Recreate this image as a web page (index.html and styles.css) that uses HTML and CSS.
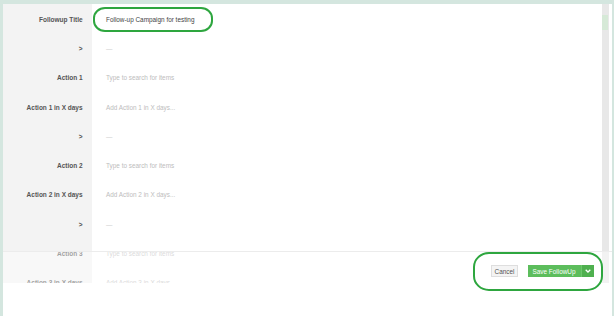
FILE: index.html
```html
<!DOCTYPE html>
<html>
<head>
<meta charset="utf-8">
<link rel="stylesheet" href="styles.css">
</head>
<body>
<div class="page">
  <div class="modal">
    <div class="modal-body">
      <div class="form">
        <div class="row"><div class="label">Followup Title</div><div class="field value">Follow-up Campaign for testing</div></div>
        <div class="row"><div class="label">&gt;</div><div class="field dash">—</div></div>
        <div class="row"><div class="label">Action 1</div><div class="field placeholder">Type to search for items</div></div>
        <div class="row"><div class="label">Action 1 in X days</div><div class="field placeholder">Add Action 1 in X days...</div></div>
        <div class="row"><div class="label">&gt;</div><div class="field dash">—</div></div>
        <div class="row"><div class="label">Action 2</div><div class="field placeholder">Type to search for items</div></div>
        <div class="row"><div class="label">Action 2 in X days</div><div class="field placeholder">Add Action 2 in X days...</div></div>
        <div class="row"><div class="label">&gt;</div><div class="field dash">—</div></div>
        <div class="row"><div class="label">Action 3</div><div class="field placeholder">Type to search for items</div></div>
        <div class="row"><div class="label">Action 3 in X days</div><div class="field placeholder">Add Action 3 in X days...</div></div>
        <div class="row"><div class="label">&gt;</div><div class="field dash">—</div></div>
      </div>
      <div class="scrollbar"><div class="thumb"></div></div>
    </div>
    <div class="modal-footer">
      <button class="btn btn-cancel">Cancel</button>
      <div class="btn-group">
        <button class="btn btn-save">Save FollowUp</button>
        <button class="btn btn-caret"><svg width="6" height="4" viewBox="0 0 6 4"><polyline points="0.7,0.8 3,3 5.3,0.8" fill="none" stroke="#fff" stroke-width="1.3"/></svg></button>
      </div>
    </div>
    <div class="mark mark-title"></div>
    <div class="mark mark-actions"></div>
  </div>
</div>
</body>
</html>
```

FILE: styles.css
```css
html, body {
  margin: 0;
  padding: 0;
}
body {
  background: #d4e6df;
  font-family: "Liberation Sans", Arial, sans-serif;
  width: 614px;
  height: 316px;
  overflow: hidden;
}
.page {
  padding: 4px 2px 0 3px;
}
.modal {
  position: relative;
  background: #fff;
  height: 312px;
  overflow: hidden;
}
.modal-body {
  display: flex;
  height: 312px;
}
.form {
  flex: 1;
  display: flex;
  flex-direction: column;
  padding-top: 0.7px;
  background: linear-gradient(to right, #f3f3f3 89px, #fff 89px);
}
.row {
  display: flex;
  align-items: center;
  height: 29.28px;
  flex-shrink: 0;
}
.label {
  width: 89px;
  box-sizing: border-box;
  padding-right: 9.4px;
  text-align: right;
  font-size: 6.5px;
  font-weight: bold;
  color: #555;
}
.field {
  padding-left: 14px;
  font-size: 6.4px;
}
.value { color: #444; }
.placeholder { color: #bdbdbd; }
.dash { color: #cfcfcf; }
.scrollbar {
  width: 7px;
  margin-right: 3px;
  background: #e8e8e8;
}
.thumb {
  margin-top: 11px;
  height: 15px;
  width: 6px;
  background: #d6e9d7;
}
.modal-footer {
  position: absolute;
  top: 247px;
  left: 0;
  right: 0;
  bottom: 0;
  border-top: 1px solid #ececec;
  background: linear-gradient(to bottom, rgba(255,255,255,0.45) 0, rgba(255,255,255,0.45) 31px, #fff 31px);
  display: flex;
  justify-content: flex-end;
  align-items: flex-start;
  gap: 9.5px;
  padding: 13px 18px 0 0;
}
.btn {
  font-family: "Liberation Sans", Arial, sans-serif;
  font-size: 6.4px;
  height: 12px;
  padding: 0;
  margin: 0;
  border: 0;
  display: flex;
  align-items: center;
  justify-content: center;
}
.btn-cancel {
  width: 27px;
  background: #f4f4f4;
  border: 1px solid #dedede;
  box-sizing: border-box;
  color: #555;
}
.btn-group {
  display: flex;
}
.btn-save {
  width: 53px;
  background: #5cbd5c;
  color: #fff;
}
.btn-caret {
  width: 13.5px;
  background: #4fb04f;
  border-left: 1px solid #6cc76c;
  box-sizing: border-box;
}
.mark {
  position: absolute;
  border: 2.2px solid #2ea63f;
  box-sizing: border-box;
  pointer-events: none;
}
.mark-title {
  left: 89.7px;
  top: 2.7px;
  width: 120.6px;
  height: 25.6px;
  border-radius: 12px / 11px;
}
.mark-actions {
  left: 469.7px;
  top: 248.3px;
  width: 130.3px;
  height: 38.4px;
  border-radius: 16px / 15px;
}
```
